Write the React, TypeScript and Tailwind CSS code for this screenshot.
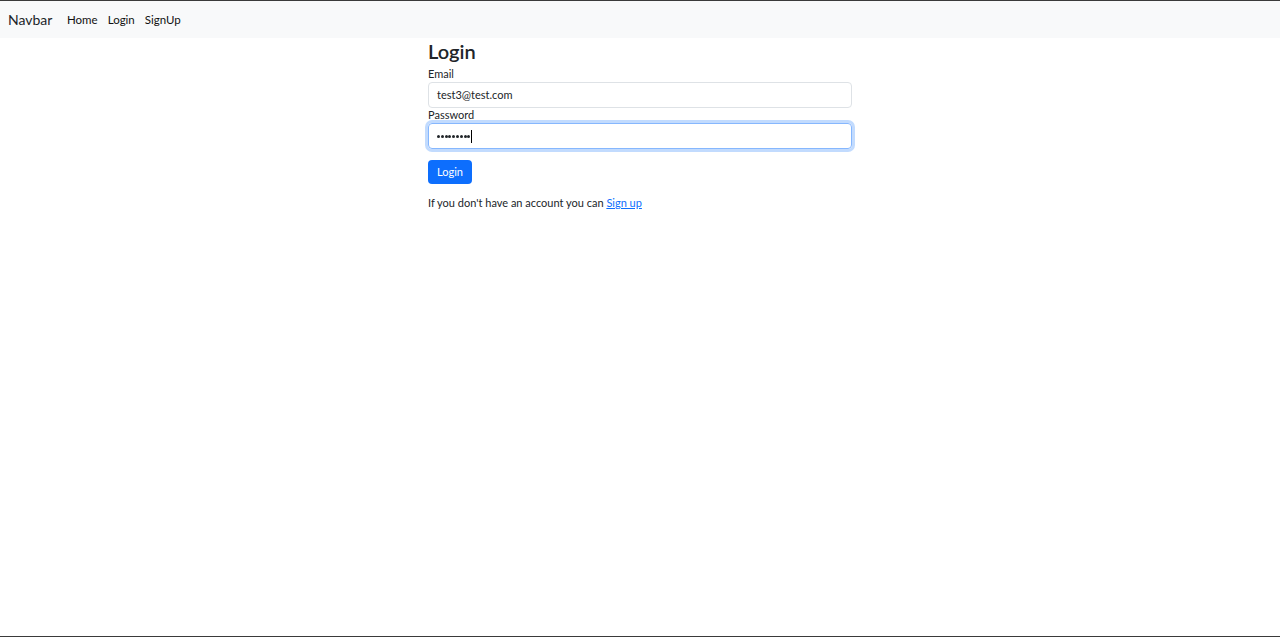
import React from "react";

export default function App() {
  return (
    <div
      className="w-[1280px] h-[637px] bg-white flex flex-col border-t border-b border-[#3a3a3a] text-[#212529]"
      style={{ fontFamily: 'Lato, "Noto Sans", sans-serif' }}
    >
      <nav className="h-[37px] bg-[#f8f9fa] flex items-center px-[8px] shrink-0">
        <span className="text-[14px] w-[59px] text-[#212529]">Navbar</span>
        <div className="flex gap-[10px] text-[11.5px] text-[#111]">
          <span>Home</span>
          <span>Login</span>
          <span>SignUp</span>
        </div>
      </nav>
      <main className="flex justify-center">
        <div className="w-[424px] flex flex-col">
          <h3 className="text-[20px] font-semibold leading-[24px] mt-[1px] mb-[4px]">Login</h3>
          <label className="text-[11px] leading-[14px] mb-[1px]">Email</label>
          <div className="h-[26px] border border-[#dee2e6] rounded-[4px] px-[8px] flex items-center text-[11px]">
            test3@test.com
          </div>
          <label className="text-[11px] leading-[14px] mb-[1px]">Password</label>
          <div className="h-[26px] border border-[#86b7fe] rounded-[4px] px-[8px] flex items-center shadow-[0_0_0_3px_rgba(13,110,253,0.25)]">
            <div className="flex gap-[0.8px]">
              {Array.from({ length: 9 }).map((_, i) => (
                <span key={i} className="w-[3px] h-[3px] rounded-full bg-[#212529]" />
              ))}
            </div>
            <span className="w-px h-[13px] bg-black ml-[1px]" />
          </div>
          <div className="mt-[11px] flex">
            <button className="h-[24px] px-[9px] bg-[#0d6efd] text-white text-[11px] rounded-[4px]">
              Login
            </button>
          </div>
          <p className="text-[11px] leading-[17px] mt-[10px]">
            If you don't have an account you can{" "}
            <a className="text-[#0d6efd] underline">Sign up</a>
          </p>
        </div>
      </main>
    </div>
  );
}
